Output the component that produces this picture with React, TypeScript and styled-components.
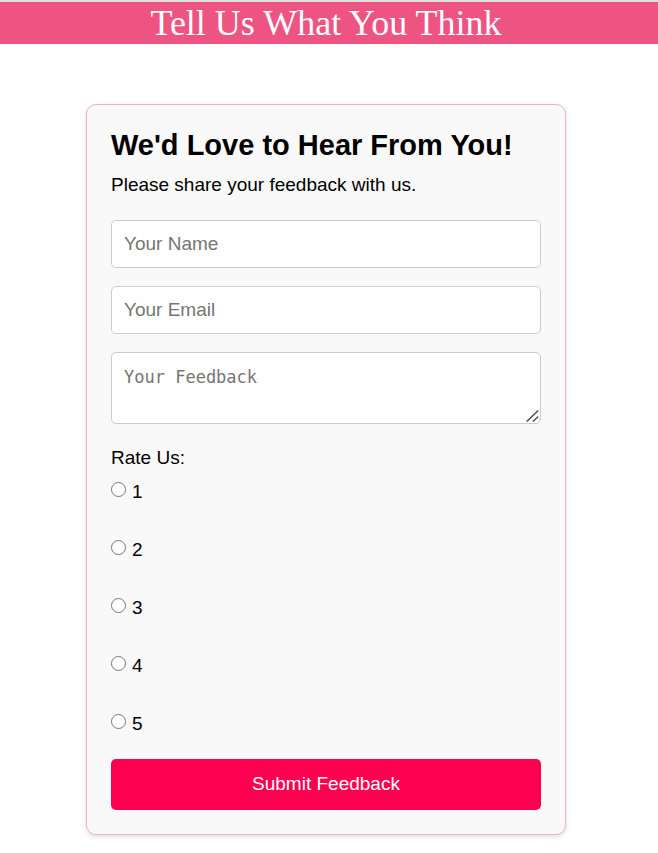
import React from "react";
import styled, { createGlobalStyle } from "styled-components";

const GlobalStyle = createGlobalStyle`
  * { box-sizing: border-box; }
  body { margin: 0; background: #fff; color: #000; font-family: "Liberation Sans", Arial, sans-serif; }
`;

const Banner = styled.header`
  border-top: 2px solid #e2dde0;
  background: #ee5482;
  color: #fff;
  padding-right: 6px;
  text-align: center;
  font: 36px/42px "Liberation Serif", "Times New Roman", serif;
`;

const Page = styled.main`
  display: flex;
  justify-content: center;
  padding: 60px 24px 18px 18px;
`;

const Card = styled.section`
  width: 100%;
  max-width: 480px;
  padding: 24px;
  border: 1px solid #f0b0c6;
  border-radius: 10px;
  background: #f9f9f9;
  box-shadow: 0 2px 5px rgba(0, 0, 0, 0.12);
`;

const Title = styled.h1`
  margin: 0;
  font-size: 29px;
  line-height: 32px;
`;

const Intro = styled.p`
  margin: 12px 0 23px;
  font-size: 19px;
  line-height: 24px;
`;

const Form = styled.form`
  display: flex;
  flex-direction: column;
`;

const Field = styled.input`
  width: 100%;
  height: 48px;
  margin: 0 0 18px;
  padding: 0 12px;
  border: 1px solid #ccc;
  border-radius: 5px;
  background: #fff;
  font: 19px "Liberation Sans", Arial, sans-serif;
  &::placeholder { color: #757575; }
`;

const MessageWrap = styled.div`
  position: relative;
  margin-bottom: 22px;
`;

const Message = styled.textarea`
  display: block;
  width: 100%;
  height: 72px;
  padding: 12px;
  border: 1px solid #ccc;
  border-radius: 5px;
  background: #fff;
  resize: vertical;
  font: 17px/24px "DejaVu Sans Mono", monospace;
  &::placeholder { color: #757575; }
  &::-webkit-resizer { background: transparent; }
`;

const Grip = styled.svg`
  position: absolute;
  right: 2px;
  bottom: 2px;
  pointer-events: none;
`;

const Rating = styled.fieldset`
  display: flex;
  flex-direction: column;
  gap: 34px;
  margin: 0 0 23px;
  padding: 0;
  border: 0;
`;

const Legend = styled.legend`
  padding: 0;
  margin-bottom: 10px;
  font-size: 19px;
  line-height: 24px;
`;

const Choice = styled.label`
  display: flex;
  align-items: center;
  gap: 6px;
  font-size: 19px;
  line-height: 24px;
`;

const Radio = styled.input`
  width: 15px;
  height: 15px;
  margin: 0 0 5px;
`;

const Submit = styled.button`
  width: 100%;
  height: 51px;
  padding: 0 0 2px;
  border: 0;
  border-radius: 5px;
  background: #ff0050;
  color: #fff;
  font: 19px "Liberation Sans", Arial, sans-serif;
  cursor: pointer;
`;

export default function App() {
  return (
    <>
      <GlobalStyle />
      <Banner>Tell Us What You Think</Banner>
      <Page>
        <Card>
          <Title>We'd Love to Hear From You!</Title>
          <Intro>Please share your feedback with us.</Intro>
          <Form onSubmit={(event) => event.preventDefault()}>
            <Field type="text" name="name" placeholder="Your Name" aria-label="Your Name" />
            <Field type="email" name="email" placeholder="Your Email" aria-label="Your Email" />
            <MessageWrap>
              <Message name="feedback" placeholder="Your Feedback" aria-label="Your Feedback" />
              <Grip width="13" height="12" viewBox="0 0 13 12" aria-hidden="true">
                <path d="M.7 11.5 12.3.5M6.8 11.5l5.5-5" fill="none" stroke="#555" strokeWidth="1.6" />
              </Grip>
            </MessageWrap>
            <Rating>
              <Legend>Rate Us:</Legend>
              {[1, 2, 3, 4, 5].map((value) => (
                <Choice key={value}>
                  <Radio type="radio" name="rating" value={value} />
                  {value}
                </Choice>
              ))}
            </Rating>
            <Submit type="submit">Submit Feedback</Submit>
          </Form>
        </Card>
      </Page>
    </>
  );
}
